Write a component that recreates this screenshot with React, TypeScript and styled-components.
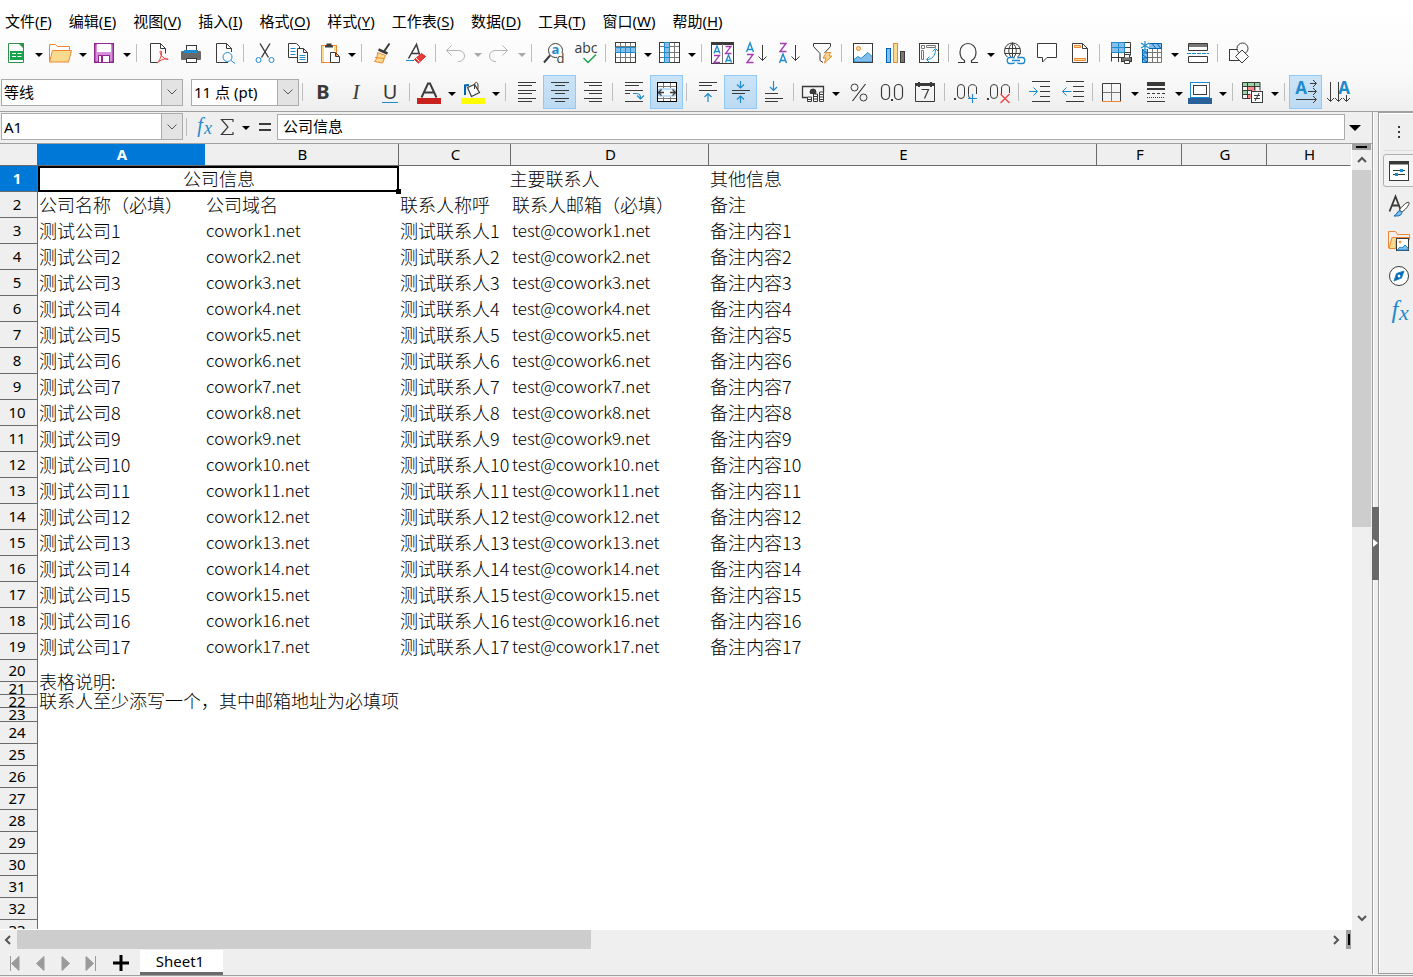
import React from "react";
import styled, { createGlobalStyle, css } from "styled-components";

const INK = "#3a3a38";
const BLUE = "#1e8bcd";
const SKY = "#83beec";
const DEEP = "#0063b1";
const ORANGE = "#ed8733";
const CREAM = "#f8db8f";
const PURPLE = "#a33eb0";
const GREEN = "#309048";
const RED = "#ed3d3b";
const GREY = "#797774";

const UI = `"Noto Sans", "Noto Sans CJK SC", sans-serif`;
const CELL = `"Noto Sans CJK SC", sans-serif`;

const GlobalStyle = createGlobalStyle`
  * { box-sizing: border-box; }
  body { margin: 0; background: #efefef; color: #000; font-family: ${UI}; font-size: 15px; }
  button, input, select { font: inherit; color: inherit; }
`;

const Shell = styled.div`
  display: flex;
  flex-direction: column;
  height: 100vh;
  overflow: hidden;
`;

const Top = styled.header`
  background: linear-gradient(#fff 10%, #f9f9f9 70%, #eee);
  border-bottom: 1px solid #9f9f9f;
`;

const MenuBar = styled.nav`
  display: flex;
  height: 35px;
  padding: 9px 0 0 5px;
  gap: 17px;
`;

const MenuItem = styled.button`
  border: 0;
  padding: 0;
  background: none;
  line-height: 24px;
  height: 24px;
  white-space: nowrap;
  u { text-underline-offset: 2px; }
`;

const Toolbar = styled.div<{ $formatting?: boolean }>`
  display: flex;
  align-items: center;
  height: ${(p) => (p.$formatting ? 40 : 36)}px;
  padding: ${(p) => (p.$formatting ? "2px 0 0 1px" : "0 0 0 1px")};
`;

const ToolButton = styled.button<{ $menu?: boolean; $on?: boolean }>`
  flex: none;
  display: flex;
  align-items: center;
  width: ${(p) => (p.$menu ? 44 : 33)}px;
  height: 34px;
  padding: 0 0 0 ${(p) => (p.$menu ? 3 : 5)}px;
  border: 0;
  background: none;
  ${(p) =>
    p.$on &&
    css`
      background: linear-gradient(#cce4f7, #bbdaf2);
      box-shadow: inset 0 0 0 1px #90c8f6;
    `}
`;

const Arrow = styled.span<{ $dim?: boolean }>`
  margin: 4px 0 0 7px;
  border: 4px solid transparent;
  border-top-color: ${(p) => (p.$dim ? "#a8a8a8" : "#000")};
  border-bottom: 0;
`;

const Divider = styled.span`
  flex: none;
  width: 8px;
  height: 18px;
  padding-left: 3px;
  &::before { content: ""; display: block; width: 1px; height: 100%; background: #bdbdbd; }
`;

const Letter = styled.span<{ $kind: "bold" | "italic" | "under" }>`
  width: 24px;
  padding-right: 2px;
  text-align: center;
  color: ${INK};
  font-size: 20px;
  line-height: 24px;
  ${(p) => p.$kind === "bold" && css`font-weight: 700;`}
  ${(p) => p.$kind === "italic" && css`font-family: "Liberation Serif", serif; font-style: italic; font-size: 21px;`}
  ${(p) => p.$kind === "under" && css`line-height: 20px; border-bottom: 1px solid ${BLUE}; width: 16px; padding: 0; margin-left: 4px;`}
`;

const Combo = styled.label<{ $width: number }>`
  flex: none;
  display: flex;
  width: ${(p) => p.$width}px;
  height: 27px;
  margin-right: 8px;
  border: 1px solid #ababab;
  background: #fff;
  &:last-of-type { margin-right: 0; }
`;

const ComboSelect = styled.select`
  flex: 1;
  min-width: 0;
  appearance: none;
  border: 0;
  padding: 0 2px;
  background: #fff;
  color: #000;
  outline: 0;
`;

const ComboArrow = styled.span`
  display: grid;
  place-items: center;
  width: 21px;
  background: #e3e3e3;
  border: 1px solid #ababab;
  border-width: 0 0 0 1px;
`;

const Svg = styled.svg`
  flex: none;
  display: block;
  fill: none;
  stroke: ${INK};
  overflow: visible;
`;

const Icon = ({ children, size = 24 }: { children: React.ReactNode; size?: number }) => (
  <Svg width={size} height={size} viewBox={`0 0 ${size} ${size}`} aria-hidden="true">
    {children}
  </Svg>
);

const Glyph = ({ x, y, size, color = INK, italic, bold, children, serif }: any) => (
  <text
    x={x}
    y={y}
    fontSize={size}
    fill={color}
    stroke="none"
    textAnchor="middle"
    fontFamily={serif ? "Liberation Serif, serif" : "Open Sans, sans-serif"}
    fontStyle={italic ? "italic" : "normal"}
    fontWeight={bold ? 700 : 400}
  >
    {children}
  </text>
);

const lines = (d: string, stroke = INK) => <path d={d} stroke={stroke} />;

const Page = () => <path d="M4.5 2.5h10l5 5v14h-15zM14.5 2.5v5h5" fill="#fff" />;

const GridLines = () => (
  <>
    <path d="M2.5 5.5h20M2.5 11.5h20M2.5 16.5h20M7.5 2v20M12.5 2v20M17.5 2v20" stroke={GREY} />
    <rect x="2.5" y="1.5" width="20" height="20" />
  </>
);

const icons: Record<string, React.ReactNode> = {
  new: (
    <>
      <path d="M4.500 2.500h11l4 4v15h-15z" fill="#fff" stroke={GREEN} />
      <path d="M14 2h6v6z" fill={GREEN} stroke="none" />
      <rect x="6" y="10" width="13" height="9" fill="#18a44c" stroke="none" />
      <path d="M8 12.500h4M13.500 12.500h4M8 15.500h4M13.500 15.500h4" stroke="#fff" />
    </>
  ),
  open: (
    <>
      <path d="M1.500 20V3.500h6l2 2h12v4" fill="#fff" stroke={ORANGE} />
      <path d="M4.500 9.500h19l-3 11.500h-19z" fill={CREAM} stroke={ORANGE} />
    </>
  ),
  save: (
    <>
      <rect x="2" y="2" width="20" height="20" fill="#92278f" stroke="none" />
      <rect x="3.500" y="3.500" width="17" height="17" fill="#d58fdb" stroke="none" />
      <rect x="5" y="3" width="14" height="8" fill="#fff" stroke="none" />
      <rect x="6.500" y="14.500" width="11" height="7" fill="#fff" stroke="#92278f" />
      <path d="M10 15v6" stroke="#92278f" strokeWidth="2" />
    </>
  ),
  pdf: (
    <>
      <path d="M11 21.500H4.500v-19h10l5 5v5M14.500 2.500v5h5" />
      <path d="M11 22c2-1 5-7 4.500-11-.3-2-2-1-1.300 1 1 3.500 4 6 8 6.300-3-.8-7 0-11.200 3.700" stroke={RED} />
    </>
  ),
  print: (
    <>
      <rect x="7.500" y="4.500" width="10" height="7" fill="#fff" />
      <rect x="2" y="10" width="20" height="9" rx="1" fill="#6b6967" stroke="none" />
      <path d="M5 10.500h14" stroke={BLUE} strokeWidth="3" />
      <rect x="7.500" y="17.500" width="10" height="4" fill="#fff" />
    </>
  ),
  preview: (
    <>
      <path d="M19.500 11V7.500l-5-5h-10v19H16M14.500 2.500v5h5" />
      <circle cx="15.500" cy="16" r="4.500" fill="#fff" stroke={BLUE} />
      <path d="M19 19.500l4 3" stroke={BLUE} />
    </>
  ),
  cut: (
    <>
      <path d="M7 2.500l8.500 14M17 2.500l-8.500 14" strokeWidth="1.400" />
      <circle cx="5.500" cy="19" r="2.500" stroke={BLUE} />
      <circle cx="18.500" cy="19" r="2.500" stroke={BLUE} />
    </>
  ),
  copy: (
    <>
      <path d="M2.500 2.500h8l3 3v11h-11z" fill="#fff" />
      <path d="M4.500 7.500h5M4.500 10.500h5M4.500 13.500h5" stroke={BLUE} />
      <path d="M11.500 7.500h6l4 4v10h-10zM17.500 7.500v4h4" fill="#fff" />
      <path d="M13.500 14.500h6M13.500 16.500h6M13.500 18.500h6" stroke={BLUE} />
    </>
  ),
  paste: (
    <>
      <rect x="4.500" y="4.500" width="15" height="17" stroke={ORANGE} fill="#fff" />
      <path d="M6 5v16M18 5v5" stroke={CREAM} strokeWidth="2" />
      <path d="M8 5.500h8M10.500 5V3.500h3V5" strokeWidth="2" />
      <path d="M13.500 11.500h5l4 4v6h-9zM18.500 11.500v4h4" fill="#fff" />
    </>
  ),
  brush: (
    <>
      <path d="M18.500 2.500l-5.500 8" strokeWidth="2" />
      <path d="M7.500 8.500l9 4" strokeWidth="2.500" />
      <path d="M6.500 11.500l8 3-3 7.500-8-1.500c2-2 3-5 3-9z" fill={CREAM} stroke={ORANGE} />
      <path d="M4 16.500l9 1" stroke={ORANGE} />
    </>
  ),
  clear: (
    <>
      <path d="M4.500 17.500l8-14 3 10M7.500 12.500h7" strokeWidth="1.500" />
      <path d="M2 19.500h8" stroke={BLUE} />
      <path d="M10.500 18.500l7-6 4 3-7 6.500z" fill={RED} stroke="#c9211e" />
      <path d="M12 17l3.500 3.500" stroke="#fff" />
    </>
  ),
  undo: <path d="M8.500 4.500l-5 5 5 5M3.500 9.500H16a5 5 0 0 1 0 11h-1" stroke="#b4b4b4" />,
  redo: <path d="M15.500 4.500l5 5-5 5M20.500 9.500H8a5 5 0 0 0 0 11h1" stroke="#b4b4b4" />,
  find: (
    <>
      <circle cx="14.500" cy="9.500" r="7" />
      <path d="M9 14.500l-6 7" strokeWidth="2" />
      <rect x="16" y="12" width="8" height="11" fill="#fbfbfb" stroke="none" />
      <Glyph x="14.500" y="13" size="13" color={BLUE} bold>a</Glyph>
      <Glyph x="19.500" y="22" size="13">d</Glyph>
    </>
  ),
  spell: (
    <>
      <Glyph x="12" y="12" size="14">abc</Glyph>
      <path d="M9.500 17l4.500 4.500 8-8" stroke="#18a44c" strokeWidth="1.500" />
    </>
  ),
  row: (
    <>
      <rect x="2" y="2" width="21" height="20" fill="#fff" stroke="none" />
      <GridLines />
      <rect x="2.500" y="6.500" width="20" height="5" fill={SKY} stroke={BLUE} />
      <path d="M7.500 7v4M12.500 7v4M17.500 7v4" stroke={BLUE} />
    </>
  ),
  column: (
    <>
      <rect x="2" y="2" width="21" height="20" fill="#fff" stroke="none" />
      <GridLines />
      <rect x="7.500" y="1.500" width="5" height="20" fill={SKY} stroke={BLUE} />
      <path d="M8 6.500h4M8 11.500h4M8 16.500h4" stroke={BLUE} />
    </>
  ),
  sort: (
    <>
      <rect x="0.500" y="1.500" width="22" height="21" fill="#fff" />
      <path d="M0 2.500h23" strokeWidth="3" />
      <path d="M11.500 3v19" stroke={GREY} />
      <path d="M3 12.500l3-7.500 3 7.500M4 10.500h4M14.500 21.500l3-7.500 3 7.500M15.500 19.500h4" stroke={BLUE} strokeWidth="1.300" />
      <path d="M14.500 5.500h5.500l-5.500 7h6M3 14.500h5.500l-5.500 7h6" stroke={PURPLE} strokeWidth="1.300" />
    </>
  ),
  asc: (
    <>
      <path d="M2.500 11l3.500-9 3.500 9M3.500 8.500h5" stroke={BLUE} strokeWidth="1.400" />
      <path d="M3 13.500h6l-6 8h6.500" stroke={PURPLE} strokeWidth="1.400" />
      <path d="M18.500 4v15.500M14.500 15.500l4 4 4-4" />
    </>
  ),
  desc: (
    <>
      <path d="M2.500 22l3.500-9 3.500 9M3.500 19.500h5" stroke={BLUE} strokeWidth="1.400" />
      <path d="M3 2.500h6l-6 8h6.500" stroke={PURPLE} strokeWidth="1.400" />
      <path d="M18.500 4v15.500M14.500 15.500l4 4 4-4" />
    </>
  ),
  filter: (
    <>
      <path d="M3.500 2.500h17v3l-6 6.500M3.500 2.500v3l6.500 7v7l3 2" />
      <path d="M16.500 11.500h4l-1.500 3.500h3l-7.500 7 1.500-5h-3z" fill={CREAM} stroke={ORANGE} />
    </>
  ),
  image: (
    <>
      <rect x="2.500" y="2.500" width="19" height="19" fill="#fff" />
      <circle cx="7.500" cy="7.500" r="2" fill={CREAM} stroke={ORANGE} />
      <path d="M3 21v-2.500l4-3 3 2 7-6 4.500 4.500v5z" fill={SKY} stroke={BLUE} />
      <rect x="2.500" y="2.500" width="19" height="19" />
    </>
  ),
  chart: (
    <>
      <rect x="2.500" y="7.500" width="4" height="14" fill={SKY} stroke={DEEP} />
      <rect x="9.500" y="2.500" width="4" height="19" fill={CREAM} stroke={ORANGE} />
      <rect x="16.500" y="10.500" width="4" height="11" fill={GREY} />
    </>
  ),
  pivot: (
    <>
      <rect x="2.500" y="2.500" width="19" height="19" fill="#fff" />
      <path d="M4.500 4.500h3v3h-3zM9.500 4.500h9v2h-9zM4.500 9.500h2v9h-2z" stroke={GREY} />
      <path d="M10 18.500c5 0 8.500-4 8.500-10M15.500 10.500l3-3 3 3M12.500 15.500l-3 3 3 3" stroke={BLUE} />
    </>
  ),
  omega: <path d="M2 21.500h6.500v-2C5.500 18 4 14.500 4 11c0-5 3.500-8.500 8-8.500S20 6 20 11c0 3.500-1.500 7-4.500 8.500v2H22" strokeWidth="1.200" />,
  link: (
    <>
      <circle cx="10.500" cy="10" r="8" />
      <path d="M3 7.500h15M2.500 12.500h16M10.500 2v15M10.500 2c-5 4-5 11 0 16M10.500 2c5 4 5 11 0 16" />
      <path d="M5 16h19v8H5z" fill="#fbfbfb" stroke="none" />
      <path d="M12.500 17.500c0-1-1-1-2-1h-3c-3 0-3 6 0 6h3c1 0 2 0 2-1M15.500 17.500c0-1 1-1 2-1h3c3 0 3 6 0 6h-3c-1 0-2 0-2-1M10 19.500h8" stroke={BLUE} strokeWidth="1.300" />
    </>
  ),
  comment: <path d="M2.500 2.500h19v14H12L7.500 21v-4.500h-5z" fill="#fff" />,
  header: (
    <>
      <Page />
      <path d="M6.500 4.500h6v2h-6zM6.500 17.500h11v2h-11z" fill={CREAM} stroke={ORANGE} />
    </>
  ),
  printRange: (
    <>
      <rect x="2" y="2" width="13" height="10" fill={SKY} stroke="none" />
      <path d="M2.500 20.500v-19h19v13M2.500 6.500h19M2.500 11.500h19M2.500 16.500h10M9.500 2v19M15.500 2v13" stroke={INK} />
      <path d="M2.500 1.500h13v10h-13zM2.500 6.500h13M9.500 2v10" stroke={BLUE} />
      <path d="M12 15h11v8H12z" fill="#fbfbfb" stroke="none" />
      <rect x="12.500" y="16.500" width="10" height="4" fill={GREY} />
      <path d="M15.500 16.500v-3h5v3M15.500 19.500h5v3h-5z" fill="#fff" />
    </>
  ),
  freeze: (
    <>
      <path d="M2 2h20v5H8v15H2z" fill={SKY} stroke="none" />
      <path d="M8 11.500h14M8 16.500h14M12.500 7v15M17.500 7v15M8 21.500h13.500V7" stroke={GREY} />
      <path d="M7.500 21.500h-5v-14M7.500 7.500v14M7.500 7.500h14v-5h-12M2.500 12h5M2.500 17h5M12.500 3l3 4M17.500 3l3 4M3 9l4 3M3 14l4 3M3 18l4 3" stroke={DEEP} />
      <path d="M0 0h9v8H0z" fill="#fbfbfb" stroke="none" />
      <path d="M5 0v9M1 2l8 5M9 2L1 7" stroke={BLUE} strokeWidth="1.200" />
    </>
  ),
  split: (
    <>
      <path d="M2.500 2.500h19v7h-19zM2.500 15.500h19v6h-19z" fill="#fff" />
      <path d="M3 4.500h18" stroke={GREY} strokeWidth="3" />
      <path d="M1 12.500h22" stroke={BLUE} strokeDasharray="4 1" />
    </>
  ),
  shapes: (
    <>
      <rect x="2.500" y="8.500" width="12" height="11" />
      <circle cx="15.500" cy="7.500" r="5.500" fill="#fbfbfb" />
      <path d="M15 9l6.500 6.500L15 22l-6.500-6.500z" fill="#fbfbfb" />
    </>
  ),
  fontColor: (
    <>
      <path d="M4.500 17.500L11 3.500h2l6.500 14M7.500 12.500h9" strokeWidth="1.900" />
      <rect x="0" y="18" width="24" height="6" fill="#c9211e" stroke="none" />
    </>
  ),
  fill: (
    <>
      <path d="M4 15V5.500l4-.5" stroke={DEEP} strokeWidth="2" />
      <path d="M6.500 7.500l7-3 5 8-8 4z" fill="#fff" strokeWidth="1.200" />
      <path d="M13.500 9V5c0-3.500 3.500-3.500 3.500 0v4" />
      <rect x="0" y="18" width="24" height="6" fill="#ff0" stroke="none" />
    </>
  ),
  left: lines("M3 2.500h18M3 5.500h14M3 10.500h18M3 13.500h14M3 18.500h18M3 21.500h14"),
  center: lines("M3 2.500h18M7 5.500h10M3 10.500h18M7 13.500h10M3 18.500h18M7 21.500h10"),
  right: lines("M3 2.500h18M8 5.500h13M3 10.500h18M8 13.500h13M3 18.500h18M8 21.500h13"),
  wrap: (
    <>
      {lines("M3 2.500h18M3 5.500h14M3 10.500h18M3 13.500h5M3 21.500h18")}
      <path d="M11 13.500h3c4 0 4.500 1.500 4.500 5.500M15 15.500l3.500 3.500 3.500-3.500" stroke={BLUE} strokeWidth="1.200" />
    </>
  ),
  merge: (
    <>
      <rect x="2.500" y="2.500" width="19" height="19" fill="#fff" />
      <path d="M8.500 3v5M15.500 3v5M8.500 17v5M15.500 17v5M3 6.500h18M3 18.500h18" stroke={GREY} />
      <rect x="3" y="9" width="18" height="7" rx="2" fill="#f6fbff" stroke={SKY} />
      <rect x="2.500" y="2.500" width="19" height="19" stroke="#000" />
      <path d="M3 12.500h6M15 12.500h6M6.500 9.500l-3 3 3 3M17.500 9.500l3 3-3 3" strokeWidth="1.300" />
    </>
  ),
  top: (
    <>
      {lines("M3 2.500h18M3 5.500h13M3 10.500h18")}
      <path d="M12 22v-8.500M8.500 17l3.500-3.500 3.500 3.500" stroke={BLUE} strokeWidth="1.200" />
    </>
  ),
  middle: (
    <>
      {lines("M3 10.500h18M3 13.500h13")}
      <path d="M11.500 1v7M8 4.500L11.500 8 15 4.500M11.500 23v-7M8 19.500l3.500-3.500 3.500 3.500" stroke={BLUE} strokeWidth="1.200" />
    </>
  ),
  bottom: (
    <>
      {lines("M3 13.500h13M3 18.500h18M3 21.500h13")}
      <path d="M11.500 1v9.500M8 7l3.500 3.500L15 7" stroke={BLUE} strokeWidth="1.200" />
    </>
  ),
  currency: (
    <>
      <path d="M6 17.500H1.500v-11h21v6" strokeWidth="1.300" />
      <circle cx="12" cy="12" r="3" fill={INK} />
      <path d="M6 14h17v8H6z" fill="#f6f6f6" stroke="none" />
      <path d="M6.500 17h4v4.500h-4zM6.500 19.500h4M12.500 14h4v7.500h-4zM12.500 16.500h4M12.500 19h4M18.500 12h4v9.500h-4zM18.500 14.500h4M18.500 17h4M18.500 19.500h4" />
    </>
  ),
  percent: (
    <>
      <circle cx="7.500" cy="7.500" r="3.500" />
      <circle cx="16.500" cy="17.500" r="3.500" />
      <path d="M18.500 4l-13 17" strokeWidth="1.200" />
    </>
  ),
  number: (
    <>
      <rect x="1.500" y="4.500" width="8" height="15" rx="4" strokeWidth="1.200" />
      <rect x="14.500" y="4.500" width="8" height="15" rx="4" strokeWidth="1.200" />
      <rect x="11" y="19" width="2" height="2" fill={INK} stroke="none" />
    </>
  ),
  date: (
    <>
      <path d="M2.500 4.500h19v17h-19z" />
      <path d="M2 4.500h20" strokeWidth="3" />
      <path d="M6 2v5M18 2v5" strokeWidth="2" />
      <path d="M8.500 9.500h7l-4 9" strokeWidth="1.200" />
    </>
  ),
  addDecimal: (
    <>
      <rect x="3.500" y="4.500" width="7" height="14" rx="3.500" />
      <path d="M17 18.500c-2-.5-2.500-2-2.500-4V8c0-4.500 8-4.500 8 0v6" />
      <rect x="0" y="18" width="2" height="2" fill={INK} stroke="none" />
      <path d="M18.500 14v9M14 18.500h9" stroke={BLUE} strokeWidth="1.200" />
    </>
  ),
  delDecimal: (
    <>
      <rect x="3.500" y="4.500" width="7" height="14" rx="3.500" />
      <path d="M14.500 14V8c0-4.500 8-4.500 8 0v5" />
      <rect x="0" y="18" width="2" height="2" fill={INK} stroke="none" />
      <path d="M13.500 14l9 9M22.500 14l-9 9" stroke={RED} strokeWidth="1.200" />
    </>
  ),
  indent: (
    <>
      {lines("M4 1.500h18M12 6.500h10M12 11.500h10M12 16.500h10M4 21.500h18")}
      <path d="M1 11.500h8M5.500 7.500l4 4-4 4" stroke={BLUE} />
    </>
  ),
  outdent: (
    <>
      {lines("M5 1.500h18M12 6.500h11M12 11.500h11M12 16.500h11M5 21.500h18")}
      <path d="M1.500 11.500h9M5.500 7.500l-4 4 4 4" stroke={BLUE} />
    </>
  ),
  borders: (
    <>
      <path d="M2.500 22V3.500h18V22" />
      <path d="M11.500 4v17M3 12.500h17" stroke={GREY} />
      <path d="M2 21.500h19" stroke={ORANGE} />
    </>
  ),
  lineStyle: (
    <>
      <path d="M3 4h18" strokeWidth="4" />
      <path d="M3 9h18" strokeWidth="2" />
      <path d="M3 13.500h18" strokeDasharray="3 2" />
      <path d="M3 17.500h18" strokeDasharray="1 1" />
      <path d="M3 21.500h18" />
    </>
  ),
  lineColor: (
    <>
      <rect x="2.500" y="2.500" width="19" height="15" stroke={BLUE} fill="#fff" />
      <rect x="5.500" y="5.500" width="13" height="9" />
      <rect x="0" y="18" width="24" height="6" fill="#2a6099" stroke="none" />
    </>
  ),
  conditional: (
    <>
      <path d="M2 2h18v4H2zM2 10h5v4H2z" fill="#98d4a4" stroke="none" />
      <path d="M7 6h9v5H7zM7 14h4v5H7z" fill="#ff8a8a" stroke="none" />
      <path d="M10 18.500H2.500v-16h17.500v8M3 6.500h17M3 10.500h9M3 14.500h7M7.500 3v15M14.500 3v7" />
      <rect x="11.500" y="11.500" width="11" height="11" fill="#fff" />
      <path d="M14 15.500h6M14 18.500h6M19 13l-4 8" />
    </>
  ),
  ltr: (
    <>
      <Glyph x="7" y="14" size="17" color={BLUE} bold>A</Glyph>
      <path d="M16 3.500h6M19 0l3.500 3.500L19 7M14 11.500h8M19 8l3.500 3.500L19 15M2 19.500h20M19 16l3.500 3.500L19 23" />
    </>
  ),
  ttb: (
    <>
      <Glyph x="17" y="14" size="17" color={BLUE} bold>A</Glyph>
      <path d="M3.500 2v19M0 18l3.500 3.500L7 18M11.500 2v19M8 18l3.500 3.500L15 18M19.500 15v6M16 18l3.500 3.500L23 18" />
    </>
  ),
  properties: (
    <>
      <rect x="2.500" y="2.500" width="19" height="19" fill="#fff" />
      <path d="M2 4h20" strokeWidth="3" />
      <path d="M6 11.500h12M6 15.500h12" />
      <path d="M13 10h3v3h-3zM8 14h3v3H8z" fill={BLUE} stroke="none" />
    </>
  ),
  styles: (
    <>
      <path d="M2.500 17.500l6-15 5 13M5 11.500h7" strokeWidth="1.800" />
      <path d="M22 8.500c1 2-5 9-7.500 9.500l-2-2C14 13 20.500 7 22 8.500z" fill="#fff" />
      <path d="M13 16.500l2 2c-1 4-5 3.500-8 3.500 3-1 3-5 6-5.500z" fill={SKY} stroke={DEEP} />
    </>
  ),
  gallery: (
    <>
      <path d="M1.500 19V2.500h7l2 3h12V8M2 19.500h6" stroke={ORANGE} />
      <path d="M5 8.500h18l-1 3H9v8H2z" fill={CREAM} stroke={ORANGE} />
      <rect x="9.500" y="9.500" width="12" height="12" fill="#fff" />
      <circle cx="13" cy="13" r="1" fill={CREAM} stroke={ORANGE} />
      <path d="M10 21l3-3 2 1 3-3 3 3v2z" fill={SKY} stroke={BLUE} />
    </>
  ),
  navigator: (
    <>
      <circle cx="12" cy="12" r="9.500" fill="#fff" />
      <path d="M17 7l-2.500 7L7 17l2.500-7.500z" fill={DEEP} stroke={BLUE} />
      <circle cx="12" cy="12" r="1.500" fill="#fff" stroke="none" />
    </>
  ),
  functions: (
    <>
      <Glyph x="8" y="19" size="25" color={BLUE} italic serif>f</Glyph>
      <Glyph x="17" y="21" size="22" color={BLUE} italic serif>x</Glyph>
    </>
  ),
};

type Tool = "|" | { icon: keyof typeof icons; name: string; menu?: boolean; on?: boolean; dim?: boolean };
const t = (icon: string, name: string, o: { menu?: boolean; on?: boolean; dim?: boolean } = {}): Tool => ({ icon, name, ...o });
const menu = { menu: true };

const standardTools: Tool[] = [
  t("new", "新建", menu), t("open", "打开", menu), t("save", "保存", menu), "|",
  t("pdf", "导出为 PDF"), t("print", "打印"), t("preview", "打印预览"), "|",
  t("cut", "剪切"), t("copy", "复制"), t("paste", "粘贴", menu), "|",
  t("brush", "复制格式"), t("clear", "清除格式"), "|",
  t("undo", "撤销", { menu: true, dim: true }), t("redo", "恢复", { menu: true, dim: true }), "|",
  t("find", "查找与替换"), t("spell", "拼写检查"), "|",
  t("row", "行", menu), t("column", "列", menu), "|",
  t("sort", "排序"), t("asc", "升序"), t("desc", "降序"), t("filter", "自动筛选"), "|",
  t("image", "图像"), t("chart", "图表"), t("pivot", "数据透视表"), "|",
  t("omega", "特殊字符", menu), t("link", "超链接"), t("comment", "批注"), t("header", "页眉和页脚"), "|",
  t("printRange", "打印区域"), t("freeze", "冻结行列", menu), t("split", "拆分窗口"), "|",
  t("shapes", "绘图"),
];

const formatTools: Tool[] = [
  t("fontColor", "字体颜色", menu), t("fill", "背景颜色", menu), "|",
  t("left", "左对齐"), t("center", "水平居中", { on: true }), t("right", "右对齐"), "|",
  t("wrap", "自动换行"), t("merge", "合并单元格", { on: true }), "|",
  t("top", "顶端对齐"), t("middle", "垂直居中", { on: true }), t("bottom", "底端对齐"), "|",
  t("currency", "货币", menu), t("percent", "百分比"), t("number", "数字"), t("date", "日期"), "|",
  t("addDecimal", "添加小数位"), t("delDecimal", "删除小数位"), "|",
  t("indent", "增加缩进"), t("outdent", "减少缩进"), "|",
  t("borders", "边框", menu), t("lineStyle", "边框样式", menu), t("lineColor", "边框颜色", menu), "|",
  t("conditional", "条件格式", menu), "|",
  t("ltr", "从左到右", { on: true }), t("ttb", "从上到下"),
];

const Tools = ({ items }: { items: Tool[] }) => (
  <>
    {items.map((item, i) =>
      item === "|" ? (
        <Divider key={i} />
      ) : (
        <ToolButton key={i} $menu={item.menu} $on={item.on} aria-label={item.name} disabled={item.dim}>
          <Icon>{icons[item.icon]}</Icon>
          {item.menu && <Arrow $dim={item.dim} />}
        </ToolButton>
      )
    )}
  </>
);

const Dropdown = ({ label, value, width }: { label: string; value: string; width: number }) => (
  <Combo $width={width}>
    <ComboSelect aria-label={label} defaultValue={value}>
      <option>{value}</option>
    </ComboSelect>
    <ComboArrow>
      <Svg width="10" height="6" viewBox="0 0 10 6"><path d="M.5.5L5 5 9.500.5" stroke="#555" /></Svg>
    </ComboArrow>
  </Combo>
);

const Body = styled.div`
  flex: 1;
  min-height: 0;
  display: flex;
`;

const Main = styled.main`
  flex: 1;
  min-width: 0;
  display: flex;
  flex-direction: column;
`;

const FormulaBar = styled.div`
  flex: none;
  display: flex;
  align-items: center;
  height: 32px;
  padding: 0 12px 2px 1px;
  border-bottom: 1px solid #9f9f9f;
`;

const BarButton = styled.button<{ $width: number }>`
  flex: none;
  display: grid;
  place-items: center;
  width: ${(p) => p.$width}px;
  height: 26px;
  padding: 0;
  border: 0;
  background: none;
`;

const Triangle = styled.span<{ $size: number }>`
  margin-top: 2px;
  border: ${(p) => p.$size}px solid transparent;
  border-top-color: #000;
  border-bottom: 0;
`;

const FormulaInput = styled.input`
  flex: 1;
  min-width: 0;
  height: 26px;
  margin: 0 4px 0 2px;
  padding: 0 5px 2px;
  border: 1px solid #ababab;
  background: #fff;
  outline: 0;
`;

const SheetArea = styled.div`
  flex: 1;
  min-height: 0;
  display: flex;
`;

const GridView = styled.div`
  flex: 1;
  min-width: 0;
  overflow: hidden;
  background: #fff;
  border-bottom: 1px solid #fff;
`;

const Sheet = styled.table`
  width: 100%;
  table-layout: fixed;
  border-collapse: separate;
  border-spacing: 0;
`;

const ColHead = styled.th<{ $on?: boolean }>`
  height: 22px;
  padding: 0 0 0 2px;
  line-height: 21px;
  font-weight: ${(p) => (p.$on ? 700 : 400)};
  color: ${(p) => (p.$on ? "#fff" : "#000")};
  background: ${(p) => (p.$on ? "#0078d7" : "#efefef")};
  border-bottom: 1px solid #6b6b6b;
  border-right: 1px solid ${(p) => (p.$on ? "#0078d7" : "#6b6b6b")};
  &:last-child { border-right-color: #efefef; }
`;

const Corner = styled.td`
  padding: 0;
  background: #efefef;
  border-bottom: 1px solid #6b6b6b;
  border-right: 1px solid #0078d7;
`;

const RowHead = styled.th<{ $on?: boolean }>`
  padding: 0;
  font-weight: ${(p) => (p.$on ? 700 : 400)};
  color: ${(p) => (p.$on ? "#fff" : "#000")};
  background: ${(p) => (p.$on ? "#0078d7" : "#efefef")};
  border-bottom: 1px solid #6b6b6b;
  border-right: 1px solid #6b6b6b;
`;

const RowLabel = styled.div<{ $height: number }>`
  height: ${(p) => p.$height - 1}px;
  line-height: ${(p) => p.$height - 1}px;
  padding-right: 3px;
  overflow: hidden;
`;

const Cell = styled.td<{ $center?: boolean; $bottom?: boolean; $active?: boolean; $latin?: boolean }>`
  padding: 0 0 3px 1px;
  font-family: ${CELL};
  font-size: ${(p) => (p.$latin ? 17 : 18)}px;
  font-weight: 300;
  line-height: 10px;
  white-space: nowrap;
  text-align: ${(p) => (p.$center ? "center" : "left")};
  vertical-align: ${(p) => (p.$bottom ? "bottom" : "middle")};
  ${(p) => p.$bottom && css`line-height: 22px;`}
  ${(p) =>
    p.$active &&
    css`
      position: relative;
      box-shadow: inset 0 0 0 2px #000;
      &::after {
        content: "";
        position: absolute;
        right: -2px;
        bottom: -2px;
        width: 5px;
        height: 5px;
        background: #000;
      }
    `}
`;

const VScroll = styled.div`
  flex: none;
  display: flex;
  flex-direction: column;
  width: 21px;
  padding: 0 1px 2px 0;
  border-left: 1px solid #fff;
  background: #efefef;
`;

const SplitGrip = styled.span<{ $vertical?: boolean }>`
  flex: none;
  display: grid;
  place-items: center;
  background: #9f9f9f;
  width: ${(p) => (p.$vertical ? "5px" : "100%")};
  height: ${(p) => (p.$vertical ? "100%" : "6px")};
  &::before {
    content: "";
    background: #000;
    width: ${(p) => (p.$vertical ? 2 : 11)}px;
    height: ${(p) => (p.$vertical ? 11 : 2)}px;
  }
`;

const ScrollButton = styled.button`
  flex: none;
  display: grid;
  place-items: center;
  min-width: 17px;
  height: 20px;
  padding: 0;
  border: 0;
  background: none;
`;

const VTrack = styled.div`
  flex: 1;
  &::before { content: ""; display: block; height: calc(100% * 15 / 31); background: #cdcdcd; }
`;

const HScroll = styled.div`
  flex: none;
  display: flex;
  align-items: center;
  height: 19px;
  padding-right: 21px;
`;

const HTrack = styled.div`
  flex: 1;
  height: 100%;
  &::before { content: ""; display: block; width: calc(100% * 7 / 16); height: 100%; background: #cdcdcd; }
`;

const TabBar = styled.div`
  flex: none;
  display: flex;
  align-items: stretch;
  height: 26px;
  padding: 1px 0 0 2px;
`;

const NavButton = styled.button`
  width: 25px;
  padding: 0;
  border: 0;
  background: none;
  display: grid;
  place-items: center;
`;

const AddButton = styled(NavButton)`
  width: 38px;
`;

const Tab = styled.button`
  width: 83px;
  padding: 0 3px 0 0;
  border: 0;
  border-bottom: 3px solid #6b6b6b;
  background: #fff;
  line-height: 22px;
`;

const Splitter = styled.div`
  flex: none;
  display: flex;
  align-items: center;
  width: 7px;
  margin-bottom: 1px;
  background: linear-gradient(90deg, #9f9f9f 1px, #fff 1px 2px, #efefef 2px 6px, #9f9f9f 6px);
`;

const Handle = styled.button`
  display: grid;
  place-items: center;
  width: 7px;
  height: 73px;
  padding: 0;
  border: 0;
  background: #696969;
`;

const Sidebar = styled.aside`
  flex: none;
  display: flex;
  flex-direction: column;
  align-items: flex-start;
  width: 34px;
  margin-bottom: 1px;
  border: solid #9f9f9f;
  border-width: 1px 0;
  box-shadow: inset 1px 1px 0 #fff;
  padding-left: 4px;
`;

const SideButton = styled.button<{ $on?: boolean }>`
  display: grid;
  place-items: center;
  width: 34px;
  height: 33px;
  margin-bottom: 2px;
  padding: 0 2px 0 0;
  border: 1px solid ${(p) => (p.$on ? "#b0b0b0" : "transparent")};
  border-radius: 3px;
  background: ${(p) => (p.$on ? "#f4f4f4" : "none")};
`;

const Kebab = styled(SideButton)`
  height: 38px;
  margin-bottom: 3px;
  border-radius: 0;
  border-bottom: 1px solid #dcdcdc;
`;

const Foot = styled.footer`
  flex: none;
  height: 2px;
  border-top: 1px solid #9f9f9f;
`;

const menus: [string, string][] = [
  ["文件", "F"], ["编辑", "E"], ["视图", "V"], ["插入", "I"], ["格式", "O"], ["样式", "Y"],
  ["工作表", "S"], ["数据", "D"], ["工具", "T"], ["窗口", "W"], ["帮助", "H"],
];

const columnWidths: (number | undefined)[] = [38, 167, 194, 112, 198, 388, 85, 85, undefined];

const rowHeight = (n: number) => (n < 20 ? 26 : n === 21 || n === 22 ? 13 : n === 23 ? 14 : 22);

const cellsFor = (n: number): React.ReactNode => {
  if (n === 1)
    return (
      <>
        <Cell colSpan={2} $center $active>公司信息</Cell>
        <Cell colSpan={2} $center>主要联系人</Cell>
        <Cell>其他信息</Cell>
      </>
    );
  if (n === 2) return ["公司名称（必填）", "公司域名", "联系人称呼", "联系人邮箱（必填）", "备注"].map((s) => <Cell key={s}>{s}</Cell>);
  if (n < 20) {
    const k = n - 2;
    return [`测试公司${k}`, `cowork${k}.net`, `测试联系人${k}`, `test@cowork${k}.net`, `备注内容${k}`].map((s) => (
      <Cell key={s} $latin={s.endsWith(".net")}>{s}</Cell>
    ));
  }
  if (n === 20) return <Cell rowSpan={2} colSpan={2} $bottom>表格说明:</Cell>;
  if (n === 22) return <Cell colSpan={3}>联系人至少添写一个，其中邮箱地址为必填项</Cell>;
  return null;
};

const navPaths = ["M3.500 4v15M12 4.500v14L4.500 11.500z", "M12 4.500v14L4.500 11.500z", "M5 4.500v14l7.500-7z", "M4 4.500v14l7.500-7zM13.500 4v15"];
const navNames = ["第一个工作表", "上一个工作表", "下一个工作表", "最后一个工作表"];

const Chevron = ({ d }: { d: string }) => (
  <Svg width="10" height="10" viewBox="0 0 10 10"><path d={d} stroke="#555" strokeWidth="2" /></Svg>
);

export default function App() {
  return (
    <Shell>
      <GlobalStyle />
      <Top>
        <MenuBar>
          {menus.map(([name, key]) => (
            <MenuItem key={name}>{name}(<u>{key}</u>)</MenuItem>
          ))}
        </MenuBar>
        <Toolbar><Tools items={standardTools} /></Toolbar>
        <Toolbar $formatting>
          <Dropdown label="字体名称" value="等线" width={182} />
          <Dropdown label="字号" value="11 点 (pt)" width={108} />
          <Divider />
          <ToolButton aria-label="粗体"><Letter $kind="bold">B</Letter></ToolButton>
          <ToolButton aria-label="斜体"><Letter $kind="italic">I</Letter></ToolButton>
          <ToolButton aria-label="下划线"><Letter $kind="under">U</Letter></ToolButton>
          <Divider />
          <Tools items={formatTools} />
        </Toolbar>
      </Top>
      <Body>
        <Main>
          <FormulaBar>
            <Dropdown label="名称框" value="A1" width={182} />
            <Divider />
            <BarButton $width={26} aria-label="函数向导">
              <Svg width="18" height="22" viewBox="0 0 18 22">
                <Glyph x="5" y="16" size="20" color={BLUE} italic serif>f</Glyph>
                <Glyph x="13" y="18" size="18" color={BLUE} italic serif>x</Glyph>
              </Svg>
            </BarButton>
            <BarButton $width={20} aria-label="选择函数">
              <Svg width="14" height="18" viewBox="0 0 14 18"><path d="M13 4V1.500H1.500L8 9l-6.500 7.500H13V14" strokeWidth="1.200" /></Svg>
            </BarButton>
            <BarButton $width={18} aria-label="函数菜单"><Triangle $size={4} /></BarButton>
            <BarButton $width={20} aria-label="公式">
              <Svg width="14" height="12" viewBox="0 0 14 12"><path d="M1 3h12M1 9h12" strokeWidth="2" /></Svg>
            </BarButton>
            <FormulaInput aria-label="输入行" defaultValue="公司信息" />
            <BarButton $width={11} aria-label="展开编辑栏"><Triangle $size={6} /></BarButton>
          </FormulaBar>
          <SheetArea>
            <GridView>
              <Sheet>
                <colgroup>
                  {columnWidths.map((w, i) => <col key={i} width={w} />)}
                </colgroup>
                <thead>
                  <tr>
                    <Corner />
                    {"ABCDEFGH".split("").map((c) => <ColHead key={c} scope="col" $on={c === "A"}>{c}</ColHead>)}
                  </tr>
                </thead>
                <tbody>
                  {Array.from({ length: 33 }, (_, i) => i + 1).map((n) => (
                    <tr key={n}>
                      <RowHead scope="row" $on={n === 1}><RowLabel $height={rowHeight(n)}>{n}</RowLabel></RowHead>
                      {cellsFor(n)}
                    </tr>
                  ))}
                </tbody>
              </Sheet>
            </GridView>
            <VScroll>
              <SplitGrip />
              <ScrollButton aria-label="向上滚动"><Chevron d="M1 7l4-4 4 4" /></ScrollButton>
              <VTrack />
              <ScrollButton aria-label="向下滚动"><Chevron d="M1 3l4 4 4-4" /></ScrollButton>
            </VScroll>
          </SheetArea>
          <HScroll>
            <ScrollButton aria-label="向左滚动"><Chevron d="M6 1L2 5l4 4" /></ScrollButton>
            <HTrack />
            <ScrollButton aria-label="向右滚动"><Chevron d="M1 1l4 4-4 4" /></ScrollButton>
            <SplitGrip $vertical />
          </HScroll>
          <TabBar>
            {navPaths.map((d, i) => (
              <NavButton key={d} aria-label={navNames[i]}>
                <Svg width="16" height="22" viewBox="0 0 16 22"><path d={d} fill="#9a9a9a" stroke="#9a9a9a" /></Svg>
              </NavButton>
            ))}
            <AddButton aria-label="添加工作表">
              <Svg width="18" height="18" viewBox="0 0 18 18"><path d="M9 1v16M1 9h16" stroke="#000" strokeWidth="3" /></Svg>
            </AddButton>
            <Tab>Sheet1</Tab>
          </TabBar>
        </Main>
        <Splitter>
          <Handle aria-label="隐藏侧边栏">
            <Svg width="5" height="8" viewBox="0 0 5 8"><path d="M0 0l5 4-5 4z" fill="#fff" stroke="none" /></Svg>
          </Handle>
        </Splitter>
        <Sidebar>
          <Kebab aria-label="侧边栏设置">
            <Svg width="4" height="14" viewBox="0 0 4 14"><path d="M2 1v2M2 6v2M2 11v2" strokeWidth="2" /></Svg>
          </Kebab>
          <SideButton $on aria-label="属性"><Icon>{icons.properties}</Icon></SideButton>
          <SideButton aria-label="样式"><Icon>{icons.styles}</Icon></SideButton>
          <SideButton aria-label="图库"><Icon>{icons.gallery}</Icon></SideButton>
          <SideButton aria-label="导航"><Icon>{icons.navigator}</Icon></SideButton>
          <SideButton aria-label="函数"><Icon>{icons.functions}</Icon></SideButton>
        </Sidebar>
      </Body>
      <Foot />
    </Shell>
  );
}
